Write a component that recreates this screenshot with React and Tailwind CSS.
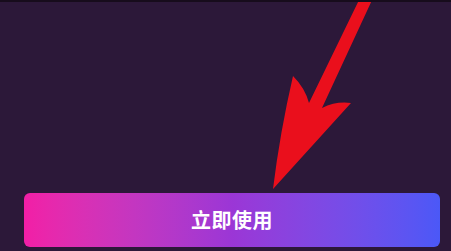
export default function App() {
  return (
    <div
      className="relative w-[451px] h-[251px] overflow-hidden bg-[#2c1839] border-t-2 border-[#170c1c] flex flex-col justify-end pl-[24px] pr-[11px] pb-[4px]"
      style={{ fontFamily: '"Noto Sans CJK SC", "Noto Sans", sans-serif' }}
    >
      {/* arrow pointing at the button */}
      <svg className="absolute left-0 top-0" width="451" height="251" viewBox="0 0 451 251">
        <path
          d="M360,-4 L373,-4 L322,106 Q336,99 351,101 L273,187 Q280,130 293,74 Q305,86 309,101 Z"
          fill="#ea0f1c"
        />
      </svg>

      <button className="relative h-[54px] w-full rounded-[6px] bg-gradient-to-r from-[#f21ea6] via-[#9b36d6] to-[#4b58f7] text-white text-[20px] font-bold tracking-[0.5px]">
        立即使用
      </button>
    </div>
  )
}
